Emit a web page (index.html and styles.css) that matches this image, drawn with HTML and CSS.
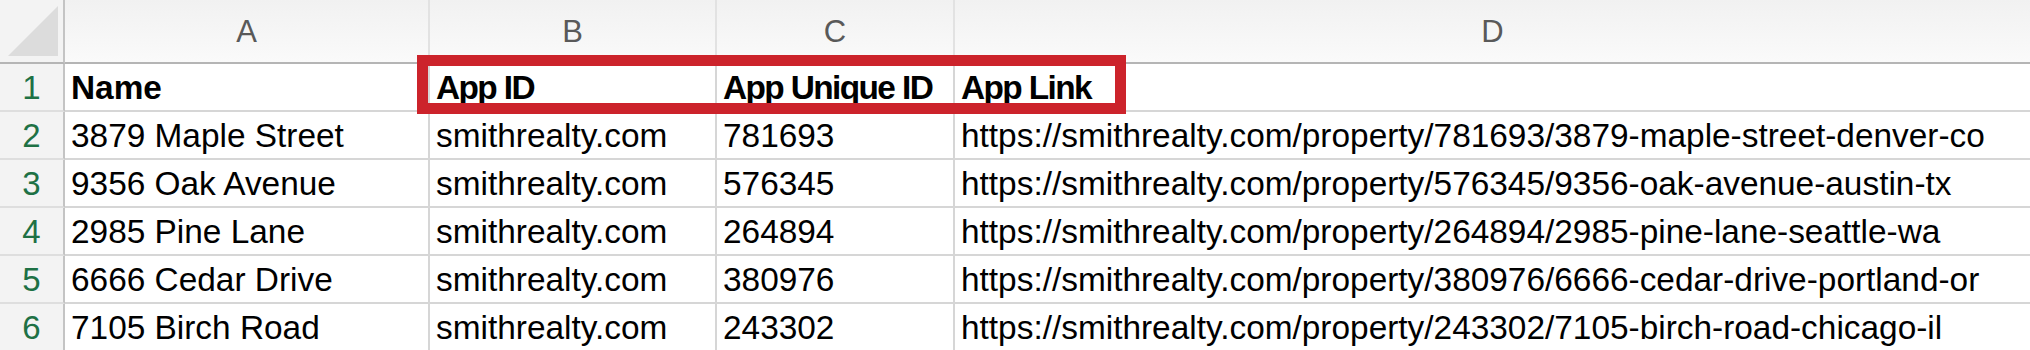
FILE: index.html
```html
<!DOCTYPE html>
<html>
<head>
<meta charset="utf-8">
<link rel="stylesheet" href="styles.css">
</head>
<body>
<div class="sheet">
  <div class="grid">
    <div class="corner"><svg class="tri" width="54" height="54" viewBox="0 0 54 54"><polygon points="2,52 52,52 52,2" fill="#dcdcdc"/></svg></div>
    <div class="colhead">A</div>
    <div class="colhead">B</div>
    <div class="colhead">C</div>
    <div class="colhead last">D</div>

    <div class="rowhead">1</div>
    <div class="cell bold">Name</div>
    <div class="cell bold tight">App ID</div>
    <div class="cell bold tight">App Unique ID</div>
    <div class="cell bold tight last">App Link</div>

    <div class="rowhead">2</div>
    <div class="cell">3879 Maple Street</div>
    <div class="cell">smithrealty.com</div>
    <div class="cell">781693</div>
    <div class="cell last">https://smithrealty.com/property/781693/3879-maple-street-denver-co</div>

    <div class="rowhead">3</div>
    <div class="cell">9356 Oak Avenue</div>
    <div class="cell">smithrealty.com</div>
    <div class="cell">576345</div>
    <div class="cell last">https://smithrealty.com/property/576345/9356-oak-avenue-austin-tx</div>

    <div class="rowhead">4</div>
    <div class="cell">2985 Pine Lane</div>
    <div class="cell">smithrealty.com</div>
    <div class="cell">264894</div>
    <div class="cell last">https://smithrealty.com/property/264894/2985-pine-lane-seattle-wa</div>

    <div class="rowhead">5</div>
    <div class="cell">6666 Cedar Drive</div>
    <div class="cell">smithrealty.com</div>
    <div class="cell">380976</div>
    <div class="cell last">https://smithrealty.com/property/380976/6666-cedar-drive-portland-or</div>

    <div class="rowhead">6</div>
    <div class="cell">7105 Birch Road</div>
    <div class="cell">smithrealty.com</div>
    <div class="cell">243302</div>
    <div class="cell last">https://smithrealty.com/property/243302/7105-birch-road-chicago-il</div>
  </div>
  <div class="highlight"></div>
</div>
</body>
</html>
```

FILE: styles.css
```css
html, body {
  margin: 0;
  padding: 0;
  background: #ffffff;
}

.sheet {
  position: relative;
  width: 2030px;
  height: 350px;
  overflow: hidden;
  font-family: "Liberation Sans", Arial, sans-serif;
  color: #000;
}

.grid {
  display: grid;
  grid-template-columns: 65px 365px 287px 238px 1fr;
  grid-template-rows: 64px repeat(6, 48px);
}

.corner {
  background: #f3f3f3;
  border-right: 2px solid #c4c4c4;
  border-bottom: 2px solid #b5b5b5;
  display: flex;
  align-items: flex-start;
  justify-content: flex-start;
  padding: 4px 0 0 6px;
  box-sizing: border-box;
}

.tri {
  display: block;
}

.colhead {
  background: linear-gradient(#f1f1f1, #fafafa);
  border-right: 2px solid #e2e2e2;
  border-bottom: 2px solid #b5b5b5;
  display: flex;
  align-items: center;
  justify-content: center;
  font-family: "Liberation Sans Narrow", "Liberation Sans", Arial, sans-serif;
  font-size: 31px;
  color: #595959;
  padding-top: 2px;
  box-sizing: border-box;
}

.colhead.last {
  border-right: none;
}

.rowhead {
  background: #f3f3f3;
  border-right: 2px solid #c4c4c4;
  border-bottom: 2px solid #dedede;
  display: flex;
  align-items: center;
  justify-content: center;
  font-size: 33px;
  color: #1e7145;
  padding-top: 2px;
  box-sizing: border-box;
}

.cell {
  border-right: 2px solid #d6d6d6;
  border-bottom: 2px solid #d6d6d6;
  font-size: 33.4px;
  line-height: 44px;
  padding: 2px 0 0 6px;
  white-space: nowrap;
  overflow: visible;
  box-sizing: border-box;
}

.cell.last {
  border-right: none;
}

.bold {
  font-weight: bold;
}

.tight {
  letter-spacing: -1.6px;
}

.highlight {
  position: absolute;
  left: 417px;
  top: 55px;
  width: 709px;
  height: 59px;
  border: 11px solid #cc232b;
  box-sizing: border-box;
}
```
